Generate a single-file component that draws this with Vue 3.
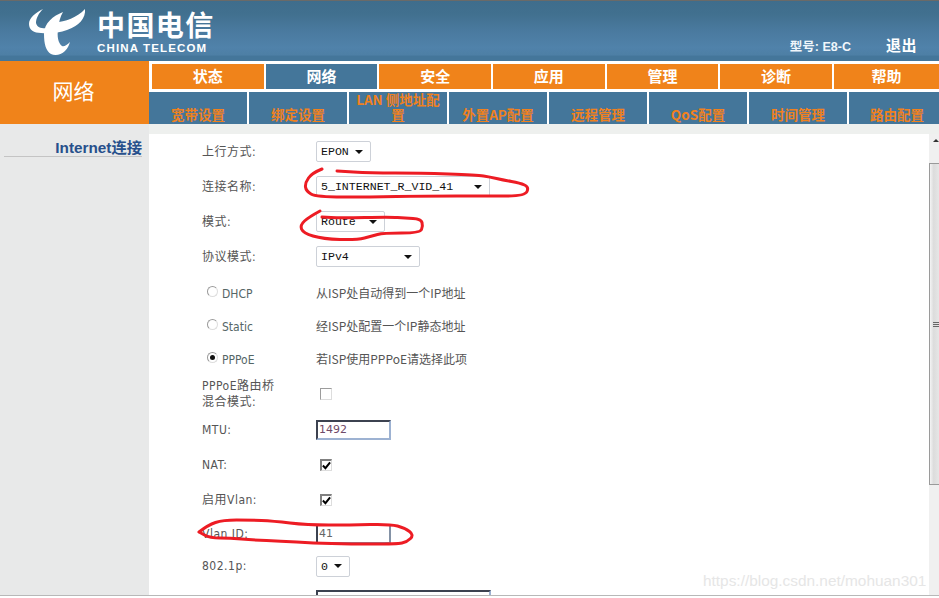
<script setup>
const topTabs = [
  { label: '状态' }, { label: '网络', active: true }, { label: '安全' }, { label: '应用' },
  { label: '管理' }, { label: '诊断' }, { label: '帮助' }
]
const subTabs = ['宽带设置', '绑定设置', 'LAN 侧地址配置', '外置AP配置', '远程管理', 'QoS配置', '时间管理', '路由配置']

// Quadratic smoothing through the midpoints of a hand-drawn scribble
function smooth(pts) {
  let d = `M${pts[0][0]} ${pts[0][1]}`
  for (let i = 1; i < pts.length - 1; i++) {
    const mx = (pts[i][0] + pts[i + 1][0]) / 2
    const my = (pts[i][1] + pts[i + 1][1]) / 2
    d += ` Q${pts[i][0]} ${pts[i][1]} ${mx} ${my}`
  }
  const l = pts[pts.length - 1]
  d += ` L${l[0]} ${l[1]}`
  return d
}
const scribbles = [
  smooth([[322, 169], [312, 173], [305, 183], [306, 191], [316, 197], [370, 197], [423, 196], [490, 196], [525, 196], [529, 187], [520, 183], [503, 180], [490, 177], [477, 175], [420, 173], [370, 173], [337, 171]]),
  smooth([[320, 211], [309, 217], [300, 225], [303, 233], [323, 239], [357, 240], [372, 236], [383, 233], [420, 233], [423, 226], [421, 219], [405, 218], [390, 217], [340, 218], [322, 217]]),
  smooth([[199, 532], [208, 525], [223, 520], [250, 520], [273, 521], [307, 525], [350, 525], [390, 524], [405, 528], [414, 535], [407, 542], [397, 544], [350, 544], [313, 543], [280, 541], [253, 540], [230, 538], [210, 538], [199, 532]])
]
</script>

<template>
  <div class="page">
    <header class="header">
      <div class="brand">
        <svg class="logo-mark" viewBox="0 0 60 52" aria-hidden="true">
          <path fill="#fff" d="M14 3 C6 7 0 12 0 18 C0 24 5 27 12 27 C20 28 30 27 38 24 C50 20 57 12 56 3 C48 12 33 17 24 16 L20 22 C14 23 8 22 7 17 C7 12 10 7 14 3 Z" />
          <path fill="#fff" d="M34 6 C24 10 15 17 15 28 C15 38 17 45 22 48 C26 50 32 49 36 45 C39 42 40 39 41 36 C38 39 35 41 33 40 C29 37 28 30 29 23 C30 16 31 11 34 6 Z" />
        </svg>
        <div class="brand-text">
          <div class="brand-cn">中国电信</div>
          <div class="brand-en">CHINA TELECOM</div>
        </div>
      </div>
      <div class="header-right">
        <span class="model">型号: E8-C</span>
        <span class="logout">退出</span>
      </div>
    </header>

    <nav class="nav">
      <div class="nav-title">网络</div>
      <div class="nav-tabs">
        <div class="top-tabs">
          <div v-for="t in topTabs" :key="t.label" class="top-tab" :class="{ active: t.active }">{{ t.label }}</div>
        </div>
        <div class="sub-tabs">
          <div v-for="s in subTabs" :key="s" class="sub-tab"><span>{{ s }}</span></div>
        </div>
      </div>
    </nav>

    <main class="main">
      <aside class="sidebar">
        <div class="side-link">Internet连接</div>
      </aside>
      <section class="panel">
        <div class="panel-band"></div>
        <div class="panel-body">
          <div class="form">
            <div class="row"><label>上行方式:</label>
              <div class="select w-epon"><span>EPON</span><i class="caret"></i></div></div>
            <div class="row"><label>连接名称:</label>
              <div class="select w-name"><span>5_INTERNET_R_VID_41</span><i class="caret"></i></div></div>
            <div class="row"><label>模式:</label>
              <div class="select w-route"><span>Route</span><i class="caret"></i></div></div>
            <div class="row"><label>协议模式:</label>
              <div class="select w-ip"><span>IPv4</span><i class="caret"></i></div></div>

            <div class="row row-radio first"><div class="radio-cell"><i class="radio"></i><span class="latin">DHCP</span></div>
              <span class="desc">从ISP处自动得到一个IP地址</span></div>
            <div class="row row-radio"><div class="radio-cell"><i class="radio"></i><span class="latin">Static</span></div>
              <span class="desc">经ISP处配置一个IP静态地址</span></div>
            <div class="row row-radio"><div class="radio-cell"><i class="radio on"></i><span class="latin">PPPoE</span></div>
              <span class="desc">若ISP使用PPPoE请选择此项</span></div>

            <div class="row row-tall"><label class="two-line">PPPoE路由桥<br>混合模式:</label>
              <i class="check"></i></div>
            <div class="row"><label>MTU:</label>
              <input class="text-input" value="1492" readonly></div>
            <div class="row"><label>NAT:</label>
              <i class="check on"><svg viewBox="0 0 10 10"><path d="M1 5 L3.8 8 L9 1.5" /></svg></i></div>
            <div class="row"><label>启用Vlan:</label>
              <i class="check on"><svg viewBox="0 0 10 10"><path d="M1 5 L3.8 8 L9 1.5" /></svg></i></div>
            <div class="row row-vlan"><label>Vlan ID:</label>
              <input class="text-input grey" value="41" readonly></div>
            <div class="row row-short"><label>802.1p:</label>
              <div class="select w-zero"><span>0</span><i class="caret"></i></div></div>
            <div class="row row-last"><label></label>
              <input class="text-input wide" readonly></div>
          </div>
          <div class="scrollbar">
            <div class="sb-btn"><i></i></div>
            <div class="sb-gap-top"></div>
            <div class="sb-thumb"><b></b><b></b><b></b></div>
            <div class="sb-rest"></div>
          </div>
        </div>
      </section>
    </main>
    <div class="foot"></div>

    <div class="watermark">https://blog.csdn.net/mohuan301</div>
    <svg class="ink" viewBox="0 0 939 598" aria-hidden="true">
      <path v-for="(d, i) in scribbles" :key="i" :d="d" />
    </svg>
  </div>
</template>

<style scoped>
.page {
  position: relative;
  width: 939px;
  height: 598px;
  overflow: hidden;
  background: #fff;
  font-family: "Noto Sans CJK SC", "Liberation Sans", sans-serif;
  display: flex;
  flex-direction: column;
}
.header {
  height: 61px;
  flex: none;
  box-sizing: border-box;
  border-top: 1px solid #6a6a68;
  background: linear-gradient(180deg, #3f6d8c 0%, #41708f 22%, #4a7a9f 50%, #5082aa 78%, #4d7fa5 90%, #44769a 92%, #44769a 100%);
  display: flex;
  justify-content: space-between;
  color: #fff;
}
.brand { display: flex; margin-left: 29px; }
.logo-mark { width: 60px; height: 52px; margin-top: 5px; flex: none; }
.brand-text { margin-left: 8px; width: 118px; }
.brand-cn {
  font-size: 28px;
  line-height: 30px;
  font-weight: 700;
  letter-spacing: 1.4px;
  margin-top: 8px;
  white-space: nowrap;
}
.brand-en {
  font-family: "Liberation Sans", sans-serif;
  font-size: 11.5px;
  line-height: 10px;
  font-weight: 700;
  letter-spacing: 1.15px;
  margin-top: 4px;
  white-space: nowrap;
}
.header-right {
  display: flex;
  align-items: center;
  height: 20px;
  margin-top: 34px;
  margin-right: 22px;
}
.model {
  font-size: 12.5px;
  font-family: "Liberation Sans", "Noto Sans CJK SC", sans-serif;
  font-weight: 700;
  color: #f0f6fb;
  margin-right: 35px;
}
.logout { font-size: 15px; line-height: 20px; letter-spacing: 0.5px; font-weight: 700; }

.nav { display: flex; height: 63px; flex: none; }
.nav-title {
  width: 149px;
  flex: none;
  background: #f0831a;
  color: #fff;
  font-size: 21px;
  display: flex;
  align-items: center;
  justify-content: center;
  padding: 0 2px 5px 0;
  box-sizing: border-box;
}
.nav-tabs { flex: 1; background: #fff; display: flex; flex-direction: column; min-width: 0; }
.top-tabs {
  display: flex;
  gap: 2px;
  padding: 3px 0 0 3px;
  height: 28px;
  box-sizing: border-box;
}
.top-tab {
  width: 111.67px;
  flex: none;
  height: 25px;
  background: #f0831a;
  color: #fff;
  font-size: 15px;
  font-weight: 700;
  line-height: 24px;
  text-align: center;
}
.top-tab.active { background: #44769a; }
.top-tab:last-child { flex: 1; width: auto; }
.sub-tabs { display: flex; gap: 2px; margin-top: 3px; height: 32px; }
.sub-tab {
  width: 98px;
  flex: none;
  background: #44769a;
  color: #f0811e;
  font-size: 13.5px;
  line-height: 15px;
  font-weight: 700;
  display: flex;
  align-items: flex-end;
  justify-content: center;
  text-align: center;
  padding: 0 3px;
  box-sizing: border-box;
}
.sub-tab span { margin-bottom: 2px; }
.sub-tab:last-child { flex: 1; width: auto; justify-content: flex-start; padding-left: 21px; }

.main { flex: 1; display: flex; min-height: 0; }
.sidebar { width: 149px; flex: none; background: #e8e9e9; padding-top: 14px; box-sizing: border-box; }
.side-link {
  margin: 0 7px 0 4px;
  text-align: right;
  font-family: "Liberation Sans", "Noto Sans CJK SC", sans-serif;
  font-size: 15.3px;
  line-height: 20px;
  font-weight: 700;
  color: #27508c;
  border-bottom: 1px solid #c4c4c4;
  height: 18px;
}
.panel { flex: 1; display: flex; flex-direction: column; min-width: 0; }
.panel-band { height: 10px; background: #eef0ee; flex: none; }
.panel-body { flex: 1; display: flex; min-height: 0; }
.form { flex: 1; padding-left: 53px; min-width: 0; overflow: hidden; }

.row { display: flex; align-items: center; height: 35px; }
.row label {
  width: 114px;
  flex: none;
  font-size: 12px;
  line-height: 16px;
  color: #555;
  font-family: "DejaVu Sans Condensed", "Noto Sans CJK SC", sans-serif;
  letter-spacing: 0.5px;
  box-sizing: border-box;
}
.row-radio { height: 33px; }
.row-radio.first { margin-top: 2px; }
.row-tall { height: 37px; }
.row-vlan { height: 33px; }
.row-short { height: 32px; }
.row-last { height: 30px; align-items: flex-start; padding-top: 8px; box-sizing: border-box; }
.radio-cell { width: 114px; flex: none; display: flex; padding-left: 5px; box-sizing: border-box; align-items: center; }
.latin {
  font-family: "DejaVu Sans Condensed", "DejaVu Sans", sans-serif;
  font-size: 12px;
  color: #566;
  margin-left: 4px;
  margin-top: 2px;
}
.desc {
  font-family: "Noto Sans CJK SC", sans-serif;
  font-size: 12px;
  color: #555;
}
.radio {
  width: 11px;
  height: 11px;
  box-sizing: border-box;
  border-radius: 50%;
  border: 1px solid #9a9a9a;
  border-right-color: #ddd;
  border-bottom-color: #ddd;
  background: #fff;
  margin-top: -3px;
  position: relative;
}
.radio.on::after {
  content: "";
  position: absolute;
  left: 2px;
  top: 2px;
  width: 5px;
  height: 5px;
  border-radius: 50%;
  background: #111;
}
.check {
  width: 12px;
  height: 12px;
  margin: 1px 0 0 4px;
  box-sizing: border-box;
  border-style: solid;
  border-width: 1px;
  border-color: #9c9c9c #ddd #ddd #9c9c9c;
  background: #fff;
  display: block;
}
.check.on { border-width: 2px 1px 1px 2px; border-color: #808080 #ddd #ddd #808080; }
.check svg { display: block; width: 9px; height: 9px; }
.check path { fill: none; stroke: #000; stroke-width: 2.2; }

.select {
  height: 21px;
  box-sizing: border-box;
  border: 1px solid #cdd1d8;
  border-radius: 2px;
  background: #fff;
  display: flex;
  align-items: center;
  justify-content: space-between;
  padding: 0 7px 0 4px;
  font-family: "Liberation Mono", monospace;
  font-size: 11.6px;
  color: #111;
  white-space: pre;
}
.caret {
  width: 0;
  height: 0;
  border-left: 4px solid transparent;
  border-right: 4px solid transparent;
  border-top: 4px solid #111;
}
.w-epon { width: 55px; }
.w-name { width: 174px; }
.w-route { width: 69px; }
.w-ip { width: 104px; }
.w-zero { width: 34px; }

.text-input {
  width: 75px;
  height: 20px;
  box-sizing: border-box;
  border: 2px solid;
  border-color: #3c4250 #9db2d2 #9db2d2 #3c4250;
  padding: 0 0 0 1px;
  outline: none;
  background: #fff;
  font-family: "DejaVu Sans", sans-serif;
  font-size: 11px;
  color: #704a68;
}
.text-input.grey { color: #666; border-color: #8492a6 #8492a6 #8492a6 #3c4250; }
.text-input.wide { width: 175px; }

.scrollbar { width: 10px; flex: none; background: #f0f0f0; display: flex; flex-direction: column; }
.sb-btn { height: 12px; display: flex; justify-content: center; align-items: center; padding-left: 4px; box-sizing: border-box; }
.sb-btn i {
  width: 0; height: 0;
  border-left: 3px solid transparent;
  border-right: 3px solid transparent;
  border-bottom: 3px solid #333;
}
.sb-gap-top { height: 17px; }
.sb-thumb {
  height: 322px;
  box-sizing: border-box;
  border: 1px solid #9a9a9a;
  border-right: 0;
  background: linear-gradient(90deg, #f4f4f4, #dcdcdc 40%, #e6e6e6);
  display: flex;
  flex-direction: column;
  justify-content: center;
  align-items: flex-end;
  gap: 1px;
}
.sb-thumb b { display: block; width: 6px; height: 1px; background: #666; }
.sb-rest { flex: 1; }

.foot { height: 3px; flex: none; border-top: 1px solid #b8b8b8; box-sizing: border-box; background: #fff; }

.watermark {
  position: absolute;
  left: 703px;
  top: 571px;
  white-space: nowrap;
  font-family: "Liberation Sans", sans-serif;
  font-size: 15.4px;
  line-height: 20px;
  color: #e6e6e6;
}
.ink {
  position: absolute;
  inset: 0;
  width: 939px;
  height: 598px;
  pointer-events: none;
}
.ink path {
  fill: none;
  stroke: #ed1c24;
  stroke-width: 3;
  stroke-linecap: round;
  stroke-linejoin: round;
}
</style>
